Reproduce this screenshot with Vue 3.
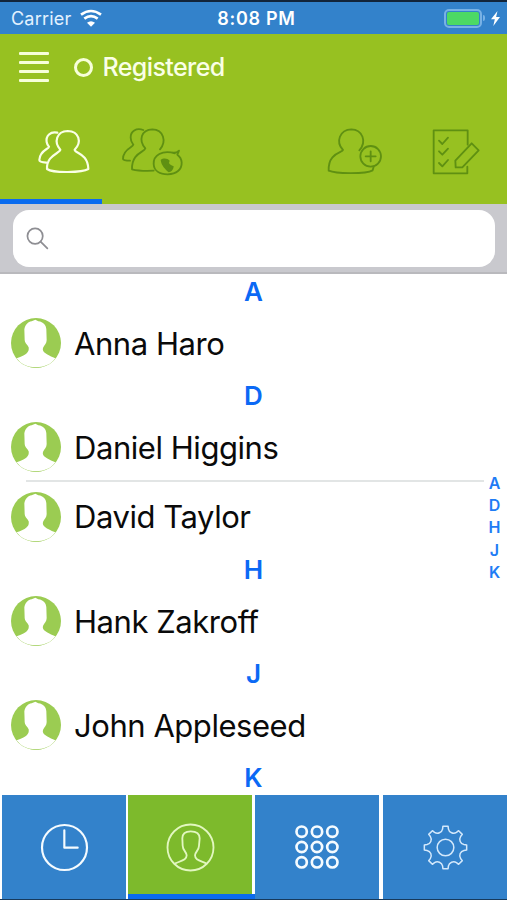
<template>
  <div class="phone">
    <div class="status-bar">
      <div class="carrier">
        <span>Carrier</span>
        <svg class="wifi" viewBox="240 24 72 54">
          <path d="M246 41 Q276 19 306 41" />
          <path d="M256 53 Q276 38 296 53" />
          <path class="solid" d="M264 65 Q276 56 288 65 L276 77 Z" />
        </svg>
      </div>
      <span class="time">8:08 PM</span>
      <div class="power">
        <div class="battery"><div class="level" :style="{ width: battery + '%' }"></div></div>
        <span class="battery-tip"></span>
        <svg class="bolt" viewBox="0 0 9 15"><path d="M6.5 0 L0 8.3 H3.8 L2.3 15 L9 6 H5.1 Z" /></svg>
      </div>
    </div>

    <header class="header">
      <div class="title-row">
        <button class="menu" aria-label="Menu">
          <span v-for="n in 4" :key="n" class="menu-line"></span>
        </button>
        <span class="status-dot"></span>
        <h1>Registered</h1>
      </div>
      <nav class="filters">
        <button class="filter active" @click="filter = 'all'">
          <svg class="icon-all" viewBox="108 78 171 150">
            <path d="M172 98 C151 93 137 108 140 126 C141 132 144 137 147 140 C147 147 119 151 118 180 C118 185 126 187 139 188" />
            <path d="M181 149 C161 127 169 94 203 93 C238 94 246 127 224 149 C224 160 264 160 265 207 C247 218 160 220 141 207 C139 166 180 160 181 149 Z" />
          </svg>
        </button>
        <button class="filter-app" @click="filter = 'app'">
          <svg class="icon-app" viewBox="360 78 195 153">
            <path d="M430 90 C409 82 391 94 392 113 C392 124 397 130 400 134 C399 143 369 146 369 177 C370 181 380 182 390 182" />
            <path d="M480 148 C500 124 491 89 457 88 C423 89 415 122 436 145 C434 157 395 158 396 208 C416 213 440 213 461 212" />
            <path d="M525 160 C486 149 460 166 461 192 C462 213 480 223 503 223 C529 222 546 210 545 187 C544 175 539 169 532 164 L537 152 C531 158 524 159 518 158" />
            <path class="handset" d="M482 180 C489 174 502 174 509 182 L507 189 C509 193 513 196 521 199 C521 208 513 217 506 217 C496 208 484 197 482 180 Z" />
          </svg>
        </button>
        <button class="add-contact">
          <svg class="icon-add" viewBox="78 80 171 147">
            <path d="M178 150 C201 124 188 88 154 87 C119 88 106 125 129 149 C127 158 84 157 86 211 C109 221 198 221 218 210 L221 199" />
            <circle cx="212" cy="168" r="31" />
            <path d="M212 153 V183 M197 168 H227" />
          </svg>
        </button>
        <button class="edit-list">
          <svg class="icon-edit" viewBox="393 83 153 144">
            <path d="M503 133 V90 H401 V219 H502 V199" />
            <path d="M417 121 L427 131 L444 112 M417 153 L427 163 L444 145 M417 188 L427 198 L444 179" />
            <path d="M467 201 L466 181 L515 129 L536 150 L487 201 Z" />
          </svg>
        </button>
      </nav>
    </header>

    <div class="search">
      <label class="search-field">
        <svg class="magnifier" viewBox="0 0 24 24">
          <circle cx="9.5" cy="9.5" r="8" />
          <path d="M15.2 15.2 L22.3 22.3" />
        </svg>
        <input v-model="query" type="text" aria-label="Search">
      </label>
    </div>

    <main class="contacts">
      <section v-for="group in groups" :key="group.letter">
        <h2>{{ group.letter }}</h2>
        <div v-for="name in group.names" :key="name" class="contact">
          <svg class="avatar" viewBox="0 0 150 150">
            <circle class="disc" cx="75" cy="75" r="75" />
            <path class="person" d="M40 34 C43 19 51 12 62 10 L73 5 L82 10 C97 12 105 21 106 34 L107 66 C107 76 101 80 97 88 C93 98 95 105 133 121 C120 140 99 148 75 148 C50 148 30 139 17 121 C48 110 55 102 53 88 C50 80 42 77 41 66 Z" />
          </svg>
          <span class="name">{{ name }}</span>
        </div>
      </section>
      <div class="index">
        <span v-for="group in groups" :key="group.letter">{{ group.letter }}</span>
      </div>
    </main>

    <footer class="tab-bar">
      <button class="tab">
        <svg class="tab-icon clock" viewBox="118 126 147 147">
          <circle cx="191.500" cy="199.500" r="67.500" />
          <path d="M191 148 V200 H231" />
        </svg>
      </button>
      <button class="tab selected">
        <svg class="tab-icon profile" viewBox="497 126 147 147">
          <circle cx="570.500" cy="199.500" r="69" />
          <path d="M525 247 C547 238 559 236 559 223 C559 213 547 208 547 194 L546 172 C546 157 556 151 571 151 C587 151 598 157 598 172 L596 194 C596 208 584 213 584 223 C584 236 596 238 617 247" />
        </svg>
      </button>
      <button class="tab">
        <svg class="tab-icon keypad" viewBox="0 0 147 147">
          <circle v-for="n in 9" :key="n" :cx="26 + ((n - 1) % 3) * 46" :cy="26 + Math.floor((n - 1) / 3) * 46" r="15.500" />
        </svg>
      </button>
      <button class="tab">
        <svg class="tab-icon gear" viewBox="-73.5 -73.5 147 147">
          <circle r="25" />
          <path :d="gearPath" />
        </svg>
      </button>
    </footer>
  </div>
</template>

<script setup>
import { ref } from 'vue'

const battery = ref(100)
const filter = ref('all')
const query = ref('')

const groups = ref([
  { letter: 'A', names: ['Anna Haro'] },
  { letter: 'D', names: ['Daniel Higgins', 'David Taylor'] },
  { letter: 'H', names: ['Hank Zakroff'] },
  { letter: 'J', names: ['John Appleseed'] },
  { letter: 'K', names: [] }
])

// one point at the given radius and angle (degrees)
const polar = (r, deg) => {
  const a = deg * Math.PI / 180
  return `${(r * Math.cos(a)).toFixed(1)} ${(r * Math.sin(a)).toFixed(1)}`
}

// eight teeth joined by rounded valleys
const buildGear = () => {
  let d = `M${polar(64, -7)}`
  for (let i = 0; i < 8; i++) {
    const a = i * 45
    d += ` L${polar(64, a + 7)} L${polar(56, a + 9)}`
    d += ` C${polar(46, a + 14)} ${polar(46, a + 31)} ${polar(56, a + 36)} L${polar(64, a + 38)}`
  }
  return d + ' Z'
}

const gearPath = buildGear()
</script>

<style>
body {
  margin: 0;
}
</style>

<style scoped>
.phone {
  width: 507px;
  height: 900px;
  box-sizing: border-box;
  border-top: 2px solid #12243a;
  border-bottom: 1px solid #173a5c;
  display: flex;
  flex-direction: column;
  overflow: hidden;
  background: #fff;
  font-family: Inter, "Liberation Sans", sans-serif;
}

button {
  padding: 0;
  border: none;
  background: none;
  cursor: pointer;
}

svg {
  display: block;
  flex: none;
  fill: none;
  stroke-linecap: round;
  stroke-linejoin: round;
}

.status-bar {
  height: 32px;
  flex: none;
  display: grid;
  grid-template-columns: 1fr auto 1fr;
  align-items: center;
  padding: 0 7px 0 11px;
  background: #3382cb;
  color: #fff;
}

.carrier {
  display: flex;
  align-items: center;
  gap: 8px;
  font-size: 18px;
  letter-spacing: 0.2px;
  color: #e3f2ff;
}

.wifi {
  width: 24px;
  height: 18px;
  stroke: #fff;
  stroke-width: 8;
  stroke-linecap: butt;
}

.wifi .solid {
  fill: #fff;
  stroke: none;
}

.time {
  margin-left: 2px;
  font-size: 18px;
  font-weight: 600;
  letter-spacing: 0.7px;
}

.power {
  display: flex;
  align-items: center;
  justify-content: flex-end;
}

.battery {
  width: 38px;
  height: 19px;
  box-sizing: border-box;
  padding: 1px;
  border: 2px solid #78b1e5;
  border-radius: 5px;
}

.level {
  height: 100%;
  border-radius: 2px;
  background: #4cd964;
}

.battery-tip {
  width: 2px;
  height: 6px;
  margin: 0 6px 0 1px;
  border-radius: 0 2px 2px 0;
  background: #78b1e5;
}

.bolt {
  width: 9px;
  height: 15px;
  fill: #fff;
}

.header {
  height: 170px;
  flex: none;
  background: #97c121;
}

.title-row {
  height: 66px;
  display: flex;
  align-items: center;
  padding-left: 19px;
  color: #faffe6;
}

.menu {
  width: 30px;
  display: flex;
  flex-direction: column;
  gap: 5.700px;
}

.menu-line {
  height: 3px;
  border-radius: 1px;
  background: #f7ffd9;
}

.status-dot {
  width: 19px;
  height: 19px;
  box-sizing: border-box;
  margin: 0 10px 0 24.500px;
  border: 3px solid #f7ffd9;
  border-radius: 50%;
}

h1 {
  margin: 0;
  font-size: 25px;
  font-weight: 500;
  letter-spacing: -0.6px;
}

.filters {
  height: 104px;
  display: flex;
  align-items: flex-start;
  stroke: #5f9012;
  stroke-width: 5.500;
}

.filter {
  width: 102px;
  height: 104px;
  box-sizing: border-box;
  padding: 26px 0 0 36px;
  display: flex;
  align-items: flex-start;
}

.filter.active {
  border-bottom: 5px solid #0a6bee;
  stroke: #faffe6;
  stroke-width: 6.500;
}

.filter-app {
  padding: 26px 0 0 18px;
}

.add-contact {
  margin-left: auto;
  padding: 26.500px 48px 0 0;
}

.edit-list {
  padding: 27.500px 25px 0 0;
}

.icon-all {
  width: 57px;
  height: 50px;
}

.icon-app {
  width: 65px;
  height: 51px;
}

.handset {
  fill: #5f9012;
  stroke: none;
}

.icon-add {
  width: 57px;
  height: 49px;
}

.icon-edit {
  width: 51px;
  height: 48px;
}

.search {
  height: 70px;
  flex: none;
  box-sizing: border-box;
  padding: 6px 12px 5px 13px;
  border-bottom: 2px solid #b9b9bd;
  background: #c9c9ce;
}

.search-field {
  height: 57px;
  box-sizing: border-box;
  padding: 0 13px;
  display: flex;
  align-items: center;
  gap: 10px;
  border-radius: 16px;
  background: #fff;
}

.magnifier {
  width: 23px;
  height: 23px;
  stroke: #8e8e93;
  stroke-width: 1.800;
}

.search-field input {
  flex: 1;
  min-width: 0;
  border: none;
  outline: none;
  background: none;
  font: inherit;
  font-size: 24px;
}

.contacts {
  position: relative;
  flex: 1;
  min-height: 0;
  overflow: hidden;
}

h2 {
  height: 34.600px;
  margin: 0;
  font-size: 26px;
  font-weight: 600;
  line-height: 35px;
  text-align: center;
  color: #0b69f5;
}

.contact {
  height: 69.500px;
  box-sizing: border-box;
  display: flex;
  align-items: center;
  gap: 13px;
  padding-left: 11px;
}

/* divider between contacts of the same group */
.contact:not(:last-child) {
  background: linear-gradient(#e2e5e5, #e2e5e5) 26px 67.500px / 458px 2px no-repeat;
}

.avatar {
  width: 50px;
  height: 50px;
}

.disc {
  fill: #9bcc52;
}

.person {
  fill: #fff;
}

.name {
  font-size: 31px;
  letter-spacing: -0.45px;
  color: #0a0a0a;
}

/* alphabet index floating over the list */
.index {
  position: absolute;
  top: 198px;
  right: 4px;
  width: 17px;
  display: flex;
  flex-direction: column;
  font-size: 16px;
  font-weight: 600;
  line-height: 22.200px;
  text-align: center;
  color: #1f7cf5;
}

.tab-bar {
  height: 104px;
  flex: none;
  display: grid;
  grid-template-columns: 126px 127px 128px 1fr;
  padding-left: 2px;
  background: #fff;
}

.tab {
  box-sizing: border-box;
  display: flex;
  align-items: center;
  justify-content: center;
  border-right: 2px solid #fff;
  background: #3382cb;
}

.tab:nth-child(3) {
  border-right-width: 4px;
}

.tab:last-child {
  border-right: none;
}

.tab.selected {
  padding: 5px 3px 0 0;
  border-right: none;
  border-bottom: 5px solid #0a6bee;
  background: linear-gradient(to right, #7dba2c 124px, #fff 124px);
}

.tab-icon {
  width: 49px;
  height: 49px;
  stroke: #f5fbff;
}

.clock {
  stroke-width: 6.500;
}

.profile {
  stroke: #e2f7c0;
  stroke-width: 5.500;
}

.keypad {
  stroke-width: 8;
}

.gear {
  stroke: #d3e8fb;
  stroke-width: 4.500;
}
</style>
